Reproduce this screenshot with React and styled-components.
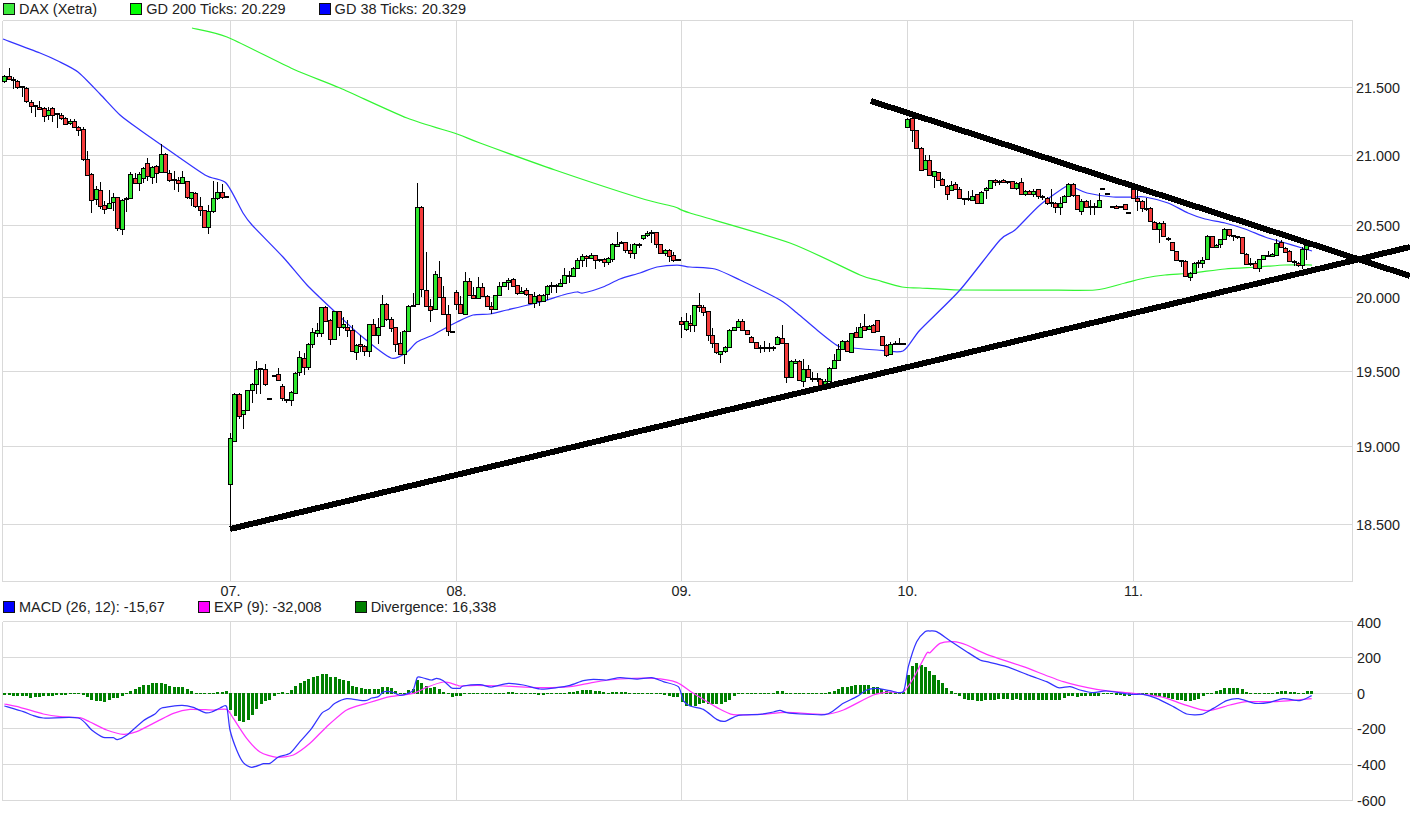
import React from "react";
import styled, { createGlobalStyle } from "styled-components";

const Global = createGlobalStyle`
  html, body { margin: 0; padding: 0; background: #fff; overflow: hidden; }
  body { font-family: "Liberation Sans", Arial, sans-serif; }
`;
const Page = styled.div`
  width: 1410px;
  height: 815px;
  display: flex;
  flex-direction: column;
`;
const Legend = styled.div`
  display: flex;
  align-items: center;
  gap: 33px;
  height: ${(p) => p.$height}px;
  padding: 0 0 ${(p) => p.$bottom}px 3px;
  box-sizing: border-box;
  font-size: 14.5px;
  line-height: 14px;
  color: #222;
`;
const LegendItem = styled.div`
  display: flex;
  align-items: center;
  gap: 4px;
  white-space: nowrap;
`;
const Swatch = styled.span`
  width: 10px;
  height: 10px;
  border: 1px solid #111;
  background: ${(p) => p.$color};
`;
const Chart = styled.svg`
  display: block;
  flex: none;
`;
const GridLine = styled.line`
  stroke: #d9d9d9;
  stroke-width: 1;
  shape-rendering: crispEdges;
`;
const AxisLabel = styled.text`
  font-family: "Liberation Sans", Arial, sans-serif;
  font-size: 14.4px;
  fill: #222;
  dominant-baseline: central;
  text-anchor: ${(p) => p.$anchor || "start"};
`;
const Wick = styled.line`
  stroke: #000;
  stroke-width: 1;
  shape-rendering: crispEdges;
`;
const Body = styled.rect`
  fill: ${(p) => (p.$kind === "G" ? "#2ee62e" : "#f43c3c")};
  stroke: #000;
  stroke-width: 1;
  shape-rendering: crispEdges;
`;
const Flat = styled.rect`
  fill: #000;
  shape-rendering: crispEdges;
`;
const Curve = styled.path`
  fill: none;
  stroke: ${(p) => p.$color};
  stroke-width: 1.25;
  stroke-linejoin: round;
`;
const Trend = styled.line`
  stroke: #000;
  stroke-width: 6;
  shape-rendering: crispEdges;
`;
const Bar = styled.rect`
  fill: #008000;
  shape-rendering: crispEdges;
`;

/* Candle data: [x, kind, top, bottom, high, low], in 3x crop units of a crop with origin ox, oy */
const seg = (ox, oy, rows) =>
  rows.map(([x, c, t, b, h, l]) => ({
    x: ox + x / 3,
    c,
    t: oy + t / 3,
    b: oy + b / 3,
    h: h === undefined ? undefined : oy + h / 3,
    l: l === undefined ? undefined : oy + l / 3,
  }));

const candles = [
  ...seg(0, 0, [
    [13,"G",229,244,224,248],[27,"R",229,236,205,240],[40,"R",236,240,232,266],[52,"R",243,262,240,266],
    [65,"F",262,262,260,290],[79,"R",265,304,262,310],[92,"R",307,319,300,338],[105,"F",319,319,318,350],
    [118,"R",320,326,304,330],[131,"R",325,347,322,365],[145,"G",329,346,322,360],[157,"R",325,346,322,365],
    [170,"F",341,341,338,383],[183,"R",344,355,340,360],[196,"R",355,373,350,376],[209,"G",362,370,358,375],
    [222,"R",362,380,358,383],[235,"R",382,390,378,408],[248,"R",388,478,380,482],[261,"R",478,526,453,528],
    [274,"R",523,601,520,638],[287,"G",568,598,558,614],[300,"R",571,617,546,626],[313,"R",616,628,604,642],
    [326,"G",610,625,570,628],[339,"G",592,606,578,632],[352,"R",592,685,590,692],[365,"G",600,688,598,704],
    [378,"F",596,596,592,636],[391,"G",523,595,516,598],[404,"R",535,549,520,553],[417,"G",523,550,516,572],
    [430,"G",505,535,500,550],[442,"R",490,529,475,542],[456,"G",502,532,498,552],[469,"R",499,520,496,548],
    [482,"G",463,517,433,518],[495,"R",463,517,460,520],[508,"R",520,539,510,545],[521,"R",536,541,512,570],
    [534,"R",541,550,530,576],[547,"G",532,550,514,552],[560,"R",544,592,542,596],[573,"G",577,595,575,618],
    [586,"R",580,619,577,624],[600,"R",619,631,590,648],[612,"R",631,680,630,682],[625,"G",634,682,615,702],
    [640,"G",595,634,543,640],[652,"G",577,595,545,600],[665,"R",577,592,552,598],[678,"F",590,590],
  ]),
  ...seg(222, 350, [
    [25,"G",265,403,250,528],[37,"G",133,272,128,275],[52,"R",133,199,128,208],[64,"G",181,193,180,237],
    [76,"G",121,179,120,182],[91,"G",103,119,98,158],[103,"G",58,103,33,132],[115,"F",58,58,55,132],
    [130,"R",58,101,42,108],[142,"F",147,147],[155,"F",79,79],[169,"R",73,89,55,90],
    [181,"R",109,143,102,152],[193,"F",149,149,149,158],[208,"G",127,151,122,168],
  ]),
  ...seg(220, 170, [
    [226,"G",610,670,606,672],[238,"G",562,607,543,618],[253,"R",565,592,550,614],[265,"G",523,590,520,600],
    [277,"G",487,521,475,533],[291,"G",481,488,460,500],[304,"G",412,490,410,500],[316,"R",412,452,408,455],
    [330,"R",451,508,448,525],[343,"G",424,508,422,510],[356,"R",424,472,422,498],[369,"G",462,472,440,478],
    [382,"R",470,481,450,500],[395,"R",481,544,465,546],[408,"G",526,547,522,570],[421,"R",523,529,495,545],
    [433,"R",529,544,525,558],[447,"G",463,544,462,562],[460,"R",461,496,448,498],[473,"G",470,496,445,522],
    [486,"G",403,468,375,470],[499,"R",403,448,400,452],[513,"R",448,475,442,485],[526,"R",472,523,470,545],
    [539,"R",520,553,485,555],[552,"G",482,553,480,582],[565,"G",409,482,405,484],[578,"R",404,408,368,408],
    [592,"G",112,403,40,405],[604,"R",110,358,108,380],[617,"R",361,409,245,412],[631,"R",409,421,388,455],
    [644,"G",313,418,303,420],[656,"R",322,382,273,384],[670,"R",380,433,348,435],[683,"R",433,484,405,498],
    [695,"F",485,485],
  ]),
  ...seg(440, 170, [
    [49,"R",365,402,360,420],[61,"R",403,430,378,432],[74,"G",334,433,305,435],[88,"R",334,376,325,378],
    [100,"R",376,385,350,388],[113,"G",352,385,322,387],[127,"R",352,378,340,380],[140,"R",378,407,375,412],
    [152,"R",407,418,395,432],[166,"G",376,417,375,420],[178,"G",347,376,337,378],[191,"G",337,347,335,352],
    [205,"G",329,337,324,360],[218,"R",328,347,325,350],[230,"R",346,370,345,375],[243,"G",362,368,350,372],
    [257,"R",361,373,355,378],[269,"R",373,400,372,402],[283,"G",377,400,365,415],[296,"R",376,394,373,408],
    [308,"G",374,394,372,396],[321,"G",349,373,345,390],[334,"F",348,348,335,368],[347,"F",347,347,342,368],
    [360,"G",338,348,328,350],[373,"G",314,338,295,340],[386,"R",314,318,304,340],[399,"G",293,319,290,322],
    [412,"G",271,293,265,295],[426,"G",259,271,252,290],[439,"R",259,263,255,290],[452,"G",256,265,250,268],
    [465,"R",256,271,255,298],[478,"F",270,270,267,276],[491,"R",268,276,265,290],[505,"G",265,277,262,285],
    [517,"G",223,268,218,277],[530,"G",221,229,185,230],[543,"F",220,220,212,222],[556,"R",217,241,215,250],
    [569,"R",241,250,222,263],[583,"G",221,249,218,268],[596,"R",221,226,218,235],[608,"G",196,205,194,210],
    [622,"G",190,196,182,202],[634,"R",187,189,180,220],[648,"R",187,223,185,235],[661,"R",223,250,221,252],
    [674,"G",241,249,238,258],[687,"R",241,258,238,275],[700,"R",256,270,245,275],[713,"F",270,270],
  ]),
  ...seg(670, 280, [
    [33,"R",124,132,110,174],[48,"G",124,148,100,152],[61,"R",128,136,106,155],[73,"G",76,136,74,155],
    [88,"R",76,82,40,95],[100,"R",82,96,74,108],[113,"R",94,165,92,183],[127,"R",166,190,145,205],
    [139,"R",190,217,188,222],[151,"G",214,222,212,248],[165,"G",200,214,198,218],[178,"G",151,200,148,202],
    [191,"G",142,150,140,153],[204,"G",124,142,118,144],[217,"R",124,150,118,152],[230,"R",151,163,150,166],
    [244,"R",170,187,168,190],[257,"R",187,204,185,205],[270,"F",204,204,196,218],[283,"F",203,203,183,215],
    [296,"F",203,203,190,215],[309,"F",203,203,198,212],[322,"G",172,193,168,196],[335,"R",175,190,135,192],
    [349,"R",190,292,188,308],[362,"G",242,290,240,292],[375,"G",242,250,236,252],[388,"R",242,300,240,303],
    [400,"G",268,303,238,320],[413,"R",266,290,256,292],[427,"F",296,296,276,305],[440,"F",298,298,280,305],
    [451,"R",296,316,294,318],[465,"G",302,316,298,318],[478,"G",265,303,262,305],[491,"G",241,265,222,267],
    [505,"G",208,241,193,243],[517,"G",182,208,180,210],[530,"R",182,214,180,216],[544,"G",160,217,158,220],
    [557,"R",157,170,140,172],[570,"G",140,170,128,172],[583,"R",137,150,102,152],[596,"G",137,148,135,150],
    [609,"R",136,157,132,160],[622,"R",121,154,120,156],[635,"R",169,196,167,198],[648,"R",196,224,192,230],
    [661,"G",193,223,185,226],[674,"F",191,191,182,194],[687,"F",191,191,175,194],[700,"F",193,193],
  ]),
  ...seg(900, 100, [
    [22,"G",57,82,54,85],[35,"R",55,90,50,125],[49,"R",91,144,89,146],[62,"R",143,210,141,212],
    [74,"G",179,208,165,210],[88,"R",179,225,165,228],[101,"G",214,229,212,265],[113,"R",217,240,215,243],
    [127,"R",236,256,234,258],[140,"R",257,283,255,300],[152,"G",254,270,242,272],[165,"R",253,268,245,270],
    [178,"R",267,295,262,297],[191,"F",298,298,294,315],[204,"F",298,298,272,304],[217,"G",289,300,270,302],
    [231,"R",283,310,282,312],[244,"G",275,310,274,313],[257,"G",265,271,262,296],[271,"G",241,265,240,267],
    [284,"R",241,246,238,258],[297,"G",242,245,240,255],[310,"R",241,246,238,250],[322,"F",246,246,244,252],
    [335,"R",244,265,243,268],[349,"G",248,264,245,270],[362,"R",247,283,235,286],[375,"G",272,282,270,287],
    [388,"R",273,282,270,286],[400,"G",272,282,268,290],[413,"R",268,288,266,298],[427,"F",291,291,285,300],
    [440,"R",293,310,291,314],[453,"F",309,309,268,320],[466,"R",308,321,306,338],[479,"G",308,321,290,345],
    [492,"G",289,306,285,310],[505,"G",252,287,250,290],[518,"R",252,285,250,290],[531,"R",286,328,284,330],
    [544,"G",302,332,298,345],[557,"R",304,320,300,325],[570,"F",321,321,300,345],[583,"F",321,321,310,345],
    [596,"G",301,322,278,324],[607,"F",266,266],[622,"F",282,282],[635,"F",322,322],
    [648,"R",319,324,315,326],[661,"F",322,322],[674,"R",313,328,311,331],[685,"F",340,340],
  ]),
  ...seg(1125, 180, [
    [25,"R",28,55,18,57],[37,"R",55,62,28,92],[50,"R",62,85,60,95],[62,"R",84,86,55,92],
    [76,"R",83,124,81,126],[88,"R",125,148,123,150],[103,"G",128,148,125,188],[115,"R",128,169,122,170],
    [130,"F",176,176,170,183],[142,"R",187,211,185,213],[154,"R",214,241,212,243],[168,"F",243,243,240,262],
    [181,"R",244,289,240,292],[194,"G",279,292,276,302],[208,"G",250,278,245,280],[220,"F",250,250,240,264],
    [232,"G",241,250,232,264],[247,"G",169,238,166,240],[260,"R",169,202,168,204],[272,"G",194,202,192,204],
    [286,"G",178,191,176,205],[298,"G",147,177,143,179],[311,"R",148,166,146,170],[325,"F",169,169,167,183],
    [337,"F",172,172,168,178],[350,"R",172,220,170,222],[363,"R",221,253,219,255],[376,"F",252,252,235,258],
    [389,"R",248,264,244,266],[403,"G",238,265,236,275],[415,"G",226,238,224,240],[428,"F",228,228,212,232],
    [441,"G",223,229,218,232],[454,"G",188,224,178,226],[467,"R",187,202,181,204],[480,"R",203,215,200,218],
    [493,"R",213,244,211,246],[506,"F",247,247,240,258],[519,"R",248,254,246,262],[532,"G",208,255,200,268],
    [544,"G",194,208,188,240],
  ]),
];

const ma38 = [
  [3,39],[40,53],[58,61],[78,72],[100,94],[120,115],[140,130],[160,144],[205,175],[226,183],[243,213],[252,225],[283,257],
  [307,285],[333,310],[360,335],[391,358],[407,352],[417,342],[433,335],[440,331],[457,322],[473,315],[490,314],
  [507,310],[540,302],[563,295],[577,292],[583,293],[603,287],[620,279],[640,273],[657,267],[677,265],[690,267],
  [715,269],[740,280],[780,300],[797,313],[817,330],[838,346],[853,348],[877,350],[903,351],[920,330],[960,290],
  [1000,240],[1015,230],[1040,205],[1067,186],[1075,188],[1087,193],[1113,197],[1133,197],[1145,197],[1168,203],
  [1188,213],[1205,219],[1225,223],[1245,229],[1265,237],[1282,242],[1302,248],[1312,251],
];
const ma200 = [
  [192,28],[227,37],[293,69],[340,88],[407,118],[457,134],[480,143],[555,170],[640,198],[675,207],[690,213],[790,243],
  [860,275],[877,280],[902,287],[920,288],[960,290],[1040,290],[1095,290],[1125,283],[1145,278],[1165,275],[1192,273],
  [1225,269],[1258,267],[1285,265],[1312,265],
];

const crop = (ox, oy, pts) => pts.map(([x, y]) => [ox + x / 3, oy + y / 3]);
const macd = [
  ...crop(0, 590, [[13,348],[70,365],[95,375],[130,384],[235,384],[275,420],[310,442],[340,443],[352,449],[380,436],[430,392],[465,372],[485,354],[545,346],[580,352],[615,368],[635,366],[660,354],[680,350],[690,420],[710,480],[730,518],[755,532],[790,521],[810,520],[835,501],[870,490],[900,455],[935,415],[965,370],[985,358],[1005,340],[1040,326],[1095,332],[1115,324],[1135,320],[1150,306],[1175,306],[1200,316],[1225,310],[1240,300],[1252,262],[1270,264],[1295,270],[1310,265],[1330,272],[1355,294],[1375,295]]),
  ...crop(460, 610, [[0,235],[10,228],[60,224],[95,231],[145,220],[190,225],[240,237],[290,233],[330,226],[370,212],[400,208],[440,210],[480,203],[530,207],[575,203],[610,215],[655,230],[670,272],[690,288],[730,298],[770,328],[795,334],[835,316],[900,313],[940,306],[960,301],[980,308],[1020,312],[1095,314],[1120,302],[1150,280],[1190,260],[1220,240],[1250,235],[1290,242],[1330,245],[1345,170],[1370,95],[1395,65]]),
  ...crop(930, 610, [[0,63],[20,65],[60,92],[110,125],[150,150],[170,155],[230,170],[300,197],[350,215],[385,233],[420,230],[450,240],[490,248],[530,243],[600,253],[640,253],[680,265],[730,290],[770,312],[815,313],[850,295],[890,272],[925,266],[975,280],[1020,277],[1060,266],[1110,272],[1145,257]]),
];
const exp9 = [
  ...crop(0, 590, [[13,342],[60,352],[130,372],[180,380],[240,383],[270,396],[320,420],[370,433],[410,425],[470,395],[520,370],[570,358],[640,360],[680,358],[700,385],[740,445],[780,486],[830,502],[880,495],[930,460],[980,410],[1040,360],[1100,340],[1170,320],[1240,310],[1280,292],[1330,276],[1370,285]]),
  ...crop(460, 610, [[0,228],[50,226],[130,228],[240,233],[330,230],[400,217],[480,207],[580,205],[650,217],[700,250],[770,292],[820,314],[900,313],[980,307],[1095,313],[1150,300],[1240,255],[1290,246],[1330,246],[1360,205],[1400,130]]),
  ...crop(930, 610, [[0,128],[30,100],[70,95],[110,105],[170,133],[280,170],[400,215],[500,238],[610,250],[700,262],[760,283],[830,302],[900,285],[950,275],[1040,275],[1100,270],[1145,266]]),
];

const STEP = 4.345;
const barRun = (start, vals) => vals.map((v, i) => ({ x: start + i * STEP, v: v / 3 }));
const bars = [
  ...barRun(4.33, [-6,-6,-8,-9,-8,-10,-14,-12,-12,-10,-8,-8,-6,-6,-5,-4,-3,-1,-6,-13,-22,-25,-25,-26,-20,-15,-16,-8,-3,8,14,20,28,28,32,33,34,30,24,22,20,20,14,10,4,1,-4,-4,2,5,7,10,-50,-70,-83,-88,-80,-67,-48,-33,-24,-20,-10,-2,5,4,12,24,32,38,44,50,55,60,60,52,52,46,42,38,24,22,18,16,16,16,16,22,20,18,10,4,4,12,16,42,34,24,18,20,14,6,-2,-11,-8]),
  ...barRun(460, [-10,-1,-1,-1,4,4,2,-3,-3,2,3,7,7,4,1,1,-3,-4,-6,-6,-3,1,1,3,4,6,6,10,12,12,12,9,9,7,3,6,6,6,6,4,3,1,3,4,4,1,-2,-6,-8,-12,-12,-28,-38,-40,-38,-32,-30,-32,-32,-32,-32,-27,-20,-10,-2,2,3,3,2,3,3,3,3,10,10,1,1,3,-3,1,1,1,1,1,1,5,8,15,20,20,24,26,26,26,26,22,20,14,8,5,5,5,5,58,84,92,86,80,68,56]),
  ...barRun(933.3, [58,42,32,18,10,1,-10,-17,-22,-22,-25,-25,-22,-20,-20,-18,-18,-18,-20,-18,-20,-20,-20,-20,-20,-20,-22,-20,-22,-20,-16,-10,-10,-12,-10,-10,-10,-10,-10,-3,-1,-4,-6,-7,-8,-8,-2,-1,-2,-4,-6,-9,-11,-12,-15,-17,-20,-22,-25,-23,-20,-17,-10,-1,3,8,13,17,19,19,18,14,7,4,2,1,1,3,4,7,10,10,7,5,4,4,10,10]),
];

/* Smooth line through the points (Catmull-Rom), so the averages read as curves rather than polygons */
const smooth = (list, k = 0.12) => {
  let d = `M${list[0][0]},${list[0][1]}`;
  for (let i = 0; i < list.length - 1; i++) {
    const p0 = list[Math.max(0, i - 1)];
    const p1 = list[i];
    const p2 = list[i + 1];
    const p3 = list[Math.min(list.length - 1, i + 2)];
    const c1x = p1[0] + (p2[0] - p0[0]) * k;
    const c1y = p1[1] + (p2[1] - p0[1]) * k;
    const c2x = p2[0] - (p3[0] - p1[0]) * k;
    const c2y = p2[1] - (p3[1] - p1[1]) * k;
    d += `C${c1x},${c1y} ${c2x},${c2y} ${p2[0]},${p2[1]}`;
  }
  return d;
};

const DAYS = [230.5, 456.5, 681.5, 907.5, 1133.5];
const DAY_LABELS = ["07.", "08.", "09.", "10.", "11."];
const PRICE_TICKS = [[87.5,"21.500"],[155.5,"21.000"],[225.5,"20.500"],[297.5,"20.000"],[371.5,"19.500"],[446.5,"19.000"],[524.5,"18.500"]];
const MACD_TICKS = [[657.5,"200"],[693.5,"0"],[728.5,"-200"],[764.5,"-400"]];
const LEFT = 2.5, RIGHT = 1352.5;

const Candle = ({ x, c, t, b, h, l }) => {
  const rx = Math.round(x);
  const top = Math.round(t), bottom = Math.round(b);
  return (
    <g>
      {h !== undefined && <Wick x1={rx + 0.5} x2={rx + 0.5} y1={Math.round(h)} y2={Math.round(l)} />}
      {c === "F" ? (
        <Flat x={rx - 2} y={top - 1} width={5} height={2} />
      ) : (
        <Body $kind={c} x={rx - 1.5} y={top + 0.5} width={4} height={Math.max(1, bottom - top)} />
      )}
    </g>
  );
};

const LegendEntry = ({ color, children }) => (
  <LegendItem>
    <Swatch $color={color} />
    {children}
  </LegendItem>
);

export default function App() {
  return (
    <Page>
      <Global />
      <Legend $height={20} $bottom={3}>
        <LegendEntry color="#3cea3c">DAX (Xetra)</LegendEntry>
        <LegendEntry color="#00ff00">GD 200 Ticks: 20.229</LegendEntry>
        <LegendEntry color="#0000ff">GD 38 Ticks: 20.329</LegendEntry>
      </Legend>
      <Chart width="1410" height="580" viewBox="0 20 1410 580">
        <GridLine x1={LEFT} x2={RIGHT} y1={20.5} y2={20.5} />
        <GridLine x1={LEFT} x2={RIGHT} y1={581.5} y2={581.5} />
        <GridLine x1={LEFT} x2={LEFT} y1={20.5} y2={581.5} />
        <GridLine x1={RIGHT} x2={RIGHT} y1={20.5} y2={581.5} />
        {PRICE_TICKS.map(([y, label]) => (
          <g key={label}>
            <GridLine x1={LEFT} x2={RIGHT} y1={y} y2={y} />
            <AxisLabel x={1356} y={y + 0.5}>{label}</AxisLabel>
          </g>
        ))}
        {DAYS.map((x, i) => (
          <g key={x}>
            <GridLine x1={x} x2={x} y1={20.5} y2={581.5} />
            <AxisLabel $anchor="middle" x={x} y={591}>{DAY_LABELS[i]}</AxisLabel>
          </g>
        ))}
        <Curve $color="#33f533" d={smooth(ma200)} />
        <Curve $color="#3333ff" d={smooth(ma38)} />
        {candles.map((k, i) => (
          <Candle key={i} {...k} />
        ))}
        <Trend x1={230} y1={529} x2={1410} y2={247} />
        <Trend x1={871} y1={101} x2={1410} y2={276} />
      </Chart>
      <Legend $height={14} $bottom={0}>
        <LegendEntry color="#0000ff">MACD (26, 12): -15,67</LegendEntry>
        <LegendEntry color="#ff00ff">EXP (9): -32,008</LegendEntry>
        <LegendEntry color="#008000">Divergence: 16,338</LegendEntry>
      </Legend>
      <Chart width="1410" height="201" viewBox="0 614 1410 201">
        <GridLine x1={LEFT} x2={RIGHT} y1={621.5} y2={621.5} />
        <GridLine x1={LEFT} x2={RIGHT} y1={800.5} y2={800.5} />
        <GridLine x1={LEFT} x2={LEFT} y1={621.5} y2={800.5} />
        <GridLine x1={RIGHT} x2={RIGHT} y1={621.5} y2={800.5} />
        {MACD_TICKS.map(([y, label]) => (
          <g key={label}>
            <GridLine x1={LEFT} x2={RIGHT} y1={y} y2={y} />
            <AxisLabel x={1357} y={y + 0.5}>{label}</AxisLabel>
          </g>
        ))}
        <AxisLabel x={1357} y={622.5}>400</AxisLabel>
        <AxisLabel x={1357} y={801}>-600</AxisLabel>
        {DAYS.map((x) => (
          <GridLine key={x} x1={x} x2={x} y1={621.5} y2={800.5} />
        ))}
        {bars.map(({ x, v }, i) => {
          const h = Math.max(1, Math.round(Math.abs(v)));
          return <Bar key={i} x={Math.round(x) - 1} y={v >= 0 ? 693 - h + 1 : 693} width={3} height={h} />;
        })}
        <Curve $color="#ff33ff" d={smooth(exp9)} />
        <Curve $color="#3333ff" d={smooth(macd)} />
      </Chart>
    </Page>
  );
}
